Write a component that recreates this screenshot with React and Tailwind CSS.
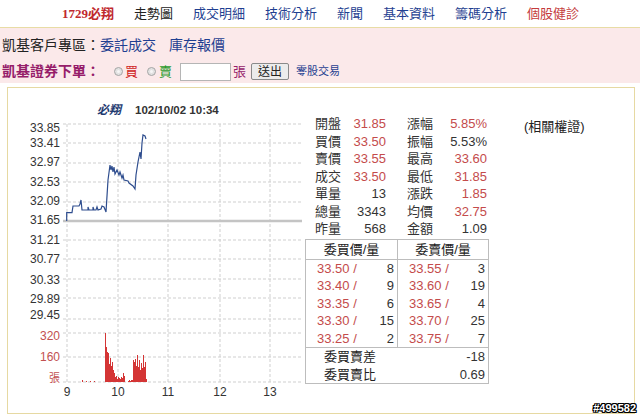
import React from "react";

const nav = [
  { label: "走勢圖", color: "text-[#222]" },
  { label: "成交明細", color: "text-[#1f3f91]" },
  { label: "技術分析", color: "text-[#1f3f91]" },
  { label: "新聞", color: "text-[#1f3f91]" },
  { label: "基本資料", color: "text-[#1f3f91]" },
  { label: "籌碼分析", color: "text-[#1f3f91]" },
  { label: "個股健診", color: "text-[#c43b3b]" },
];

const quotes = [
  ["開盤", "31.85", true, "漲幅", "5.85%", true],
  ["買價", "33.50", true, "振幅", "5.53%", false],
  ["賣價", "33.55", true, "最高", "33.60", true],
  ["成交", "33.50", true, "最低", "31.85", true],
  ["單量", "13", false, "漲跌", "1.85", true],
  ["總量", "3343", false, "均價", "32.75", true],
  ["昨量", "568", false, "金額", "1.09", false],
];

const book = [
  ["33.50", "8", "33.55", "3"],
  ["33.40", "9", "33.60", "19"],
  ["33.35", "6", "33.65", "4"],
  ["33.30", "15", "33.70", "25"],
  ["33.25", "2", "33.75", "7"],
];

const priceLabels = [
  ["33.85", 128], ["33.41", 143], ["32.97", 162], ["32.53", 182], ["32.09", 201],
  ["31.65", 220], ["31.21", 240], ["30.77", 259], ["30.33", 280], ["29.89", 299], ["29.45", 315],
];
const hLines = [124, 143, 163, 182, 202, 240, 259, 279, 298, 319, 333, 357, 382];
const vLines = [67, 118, 168, 220, 270];

const pricePath =
  "66.7,221 66.7,212.7 72,212.7 73,206 79,206 80,204 81,200 82,210 88,210 88,207 89,210 93,210 93,207 94,210 96,210 97,207 98,210 101,209 102,206 104,207 106,212 108,180 110,165 111,170 112,166 113,172 114,167 115,174 117,170 119,175 120,172 122,178 123,175 124,180 128,181 129,183 133,186 135,189 136,175 138,162 140,152 141,159 142,143 143,135 145,136 146,139";

const volumes = [
  [82, 2], [86, 1], [90, 1], [94, 1],
  [105, 49], [106, 35], [107, 30], [108, 29], [109, 18], [110, 24], [111, 16], [112, 20],
  [113, 12], [114, 9], [115, 5], [116, 6], [117, 3], [118, 5], [119, 4], [120, 3],
  [121, 5], [122, 4], [123, 9], [124, 6],
  [128, 1], [129, 2], [130, 1], [131, 2], [132, 2],
  [133, 22], [134, 20], [135, 23], [136, 16], [137, 27], [138, 15], [139, 22],
  [140, 12], [141, 19], [142, 14], [143, 27], [144, 15], [145, 20], [146, 3],
];

function Chart() {
  return (
    <svg width="297" height="320" viewBox="8 88 297 320" className="shrink-0">
      {hLines.map((y) => (
        <line key={y} x1="63" x2="302" y1={y} y2={y} stroke="#cfcfcf" strokeDasharray="3 2" />
      ))}
      {vLines.map((x) => (
        <line key={x} x1={x} x2={x} y1="124" y2="382" stroke="#cfcfcf" strokeDasharray="3 2" />
      ))}
      <line x1="63" x2="302" y1="221" y2="221" stroke="#c4c4c4" strokeWidth="2.5" />
      <polyline points={pricePath} fill="none" stroke="#2e4d8e" strokeWidth="1.2" />
      {volumes.map(([x, h]) => (
        <rect key={x} x={x} y={382 - h} width="1" height={h} fill="#d43535" />
      ))}
      <text x="97" y="110" dominantBaseline="central" fontSize="12" fontWeight="bold" fontStyle="italic" fill="#1e3a70">
        必翔
      </text>
      <text x="135" y="110" dominantBaseline="central" fontSize="11.5" fontWeight="bold" fill="#333">
        102/10/02 10:34
      </text>
      {priceLabels.map(([t, y]) => (
        <text key={t} x="60" y={y} textAnchor="end" dominantBaseline="central" fontSize="12" fill="#333">
          {t}
        </text>
      ))}
      <text x="60" y="336" textAnchor="end" dominantBaseline="central" fontSize="12" fill="#c25050">320</text>
      <text x="60" y="357" textAnchor="end" dominantBaseline="central" fontSize="12" fill="#c25050">160</text>
      <text x="60" y="378" textAnchor="end" dominantBaseline="central" fontSize="11" fill="#c25050">張</text>
      {["9", "10", "11", "12", "13"].map((t, i) => (
        <text key={t} x={vLines[i]} y="392" textAnchor="middle" dominantBaseline="central" fontSize="12" fill="#333">
          {t}
        </text>
      ))}
    </svg>
  );
}

function Radio() {
  return (
    <span className="flex h-[9px] w-[9px] items-center justify-center rounded-full border border-[#a5a5a5] bg-[#e2e2e2]">
      <span className="h-[3px] w-[3px] rounded-full bg-[#f6f6f6]" />
    </span>
  );
}

export default function App() {
  return (
    <div className="relative h-[420px] w-[640px] overflow-hidden bg-white font-['Liberation_Sans','Noto_Sans_CJK_TC',sans-serif] text-[13px] text-[#333]">
      <nav className="flex h-[27px] items-center gap-[20px] pl-[62px] text-[13px]">
        <span className="font-['Liberation_Serif','Noto_Sans_CJK_TC',serif] font-bold text-[#c0282d]">1729必翔</span>
        {nav.map((n) => (
          <span key={n.label} className={n.color}>
            {n.label}
          </span>
        ))}
      </nav>

      <div className="border-t border-[#e8dca5] bg-[#fbe9ea] pl-[2px]">
        <div className="flex h-[34px] items-center text-[14px]">
          <span className="text-[#222]">凱基客戶專區：</span>
          <span className="text-[#1f3f91]">委託成交</span>
          <span className="ml-[13px] text-[#1f3f91]">庫存報價</span>
        </div>
        <div className="flex h-[21px] items-center pb-[2px]">
          <span className="text-[14px] font-bold text-[#961d6a]">凱基證券下單：</span>
          <span className="ml-[14px]"><Radio /></span>
          <span className="ml-[2px] text-[#d02525]">買</span>
          <span className="ml-[9px]"><Radio /></span>
          <span className="ml-[3px] text-[#2a9a2a]">賣</span>
          <span className="ml-[8px] h-[18px] w-[51px] border border-[#b5b5b5] bg-white" />
          <span className="ml-[2px] text-[#961d6a]">張</span>
          <span className="ml-[5px] flex h-[17px] items-center rounded-[2px] border border-[#8a8a8a] bg-[#ececec] px-[6px] text-[12px] text-[#222]">
            送出
          </span>
          <span className="ml-[7px] text-[11px] text-[#1f3f91]">零股交易</span>
        </div>
      </div>

      <div className="mx-[7px] mt-[4px] flex h-[327px] w-[628px] border border-[#e6d9a2]">
        <Chart />

        <div className="flex w-[184px] shrink-0 flex-col pt-[27px]">
          {quotes.map(([l1, v1, r1, l2, v2, r2]) => (
            <div key={l1} className="flex h-[17.5px] items-center pl-[10px]">
              <span className="w-[26px]">{l1}</span>
              <span className={`w-[45px] text-right ${r1 ? "text-[#c44b4b]" : ""}`}>{v1}</span>
              <span className="ml-[21px] w-[26px]">{l2}</span>
              <span className={`w-[54px] text-right ${r2 ? "text-[#c44b4b]" : ""}`}>{v2}</span>
            </div>
          ))}

          <div className="mt-[1.5px] w-[184px] border border-[#bdbdbd]">
            <div className="flex h-[20px] border-b border-[#bdbdbd]">
              <div className="flex w-[92px] items-center justify-center border-r border-[#bdbdbd] text-[#222]">委買價/量</div>
              <div className="flex flex-1 items-center justify-center text-[#222]">委賣價/量</div>
            </div>
            <div className="flex border-b border-[#bdbdbd]">
              <div className="w-[92px] border-r border-[#bdbdbd]">
                {book.map(([p, q]) => (
                  <div key={p} className="flex h-[17.4px] items-center justify-between pl-[11px] pr-[3px]">
                    <span className="text-[#c44b4b]">{p} /</span>
                    <span>{q}</span>
                  </div>
                ))}
              </div>
              <div className="flex-1">
                {book.map(([, , p, q]) => (
                  <div key={p} className="flex h-[17.4px] items-center justify-between pl-[11px] pr-[3px]">
                    <span className="text-[#c44b4b]">{p} /</span>
                    <span>{q}</span>
                  </div>
                ))}
              </div>
            </div>
            <div className="flex h-[18px] items-center justify-between pl-[18px] pr-[3px]">
              <span className="text-[#222]">委買賣差</span>
              <span>-18</span>
            </div>
            <div className="flex h-[17px] items-center justify-between pl-[18px] pr-[3px]">
              <span className="text-[#222]">委買賣比</span>
              <span>0.69</span>
            </div>
          </div>
        </div>

        <div className="pl-[35px] pt-[29px] text-[#222]">(相關權證)</div>
      </div>

      <span className="absolute bottom-[4px] right-[4px] text-[11px] font-bold text-white [text-shadow:1px_0_0_#000,-1px_0_0_#000,0_1px_0_#000,0_-1px_0_#000,1px_1px_0_#000,-1px_-1px_0_#000,1px_-1px_0_#000,-1px_1px_0_#000]">
        #499582
      </span>
    </div>
  );
}
